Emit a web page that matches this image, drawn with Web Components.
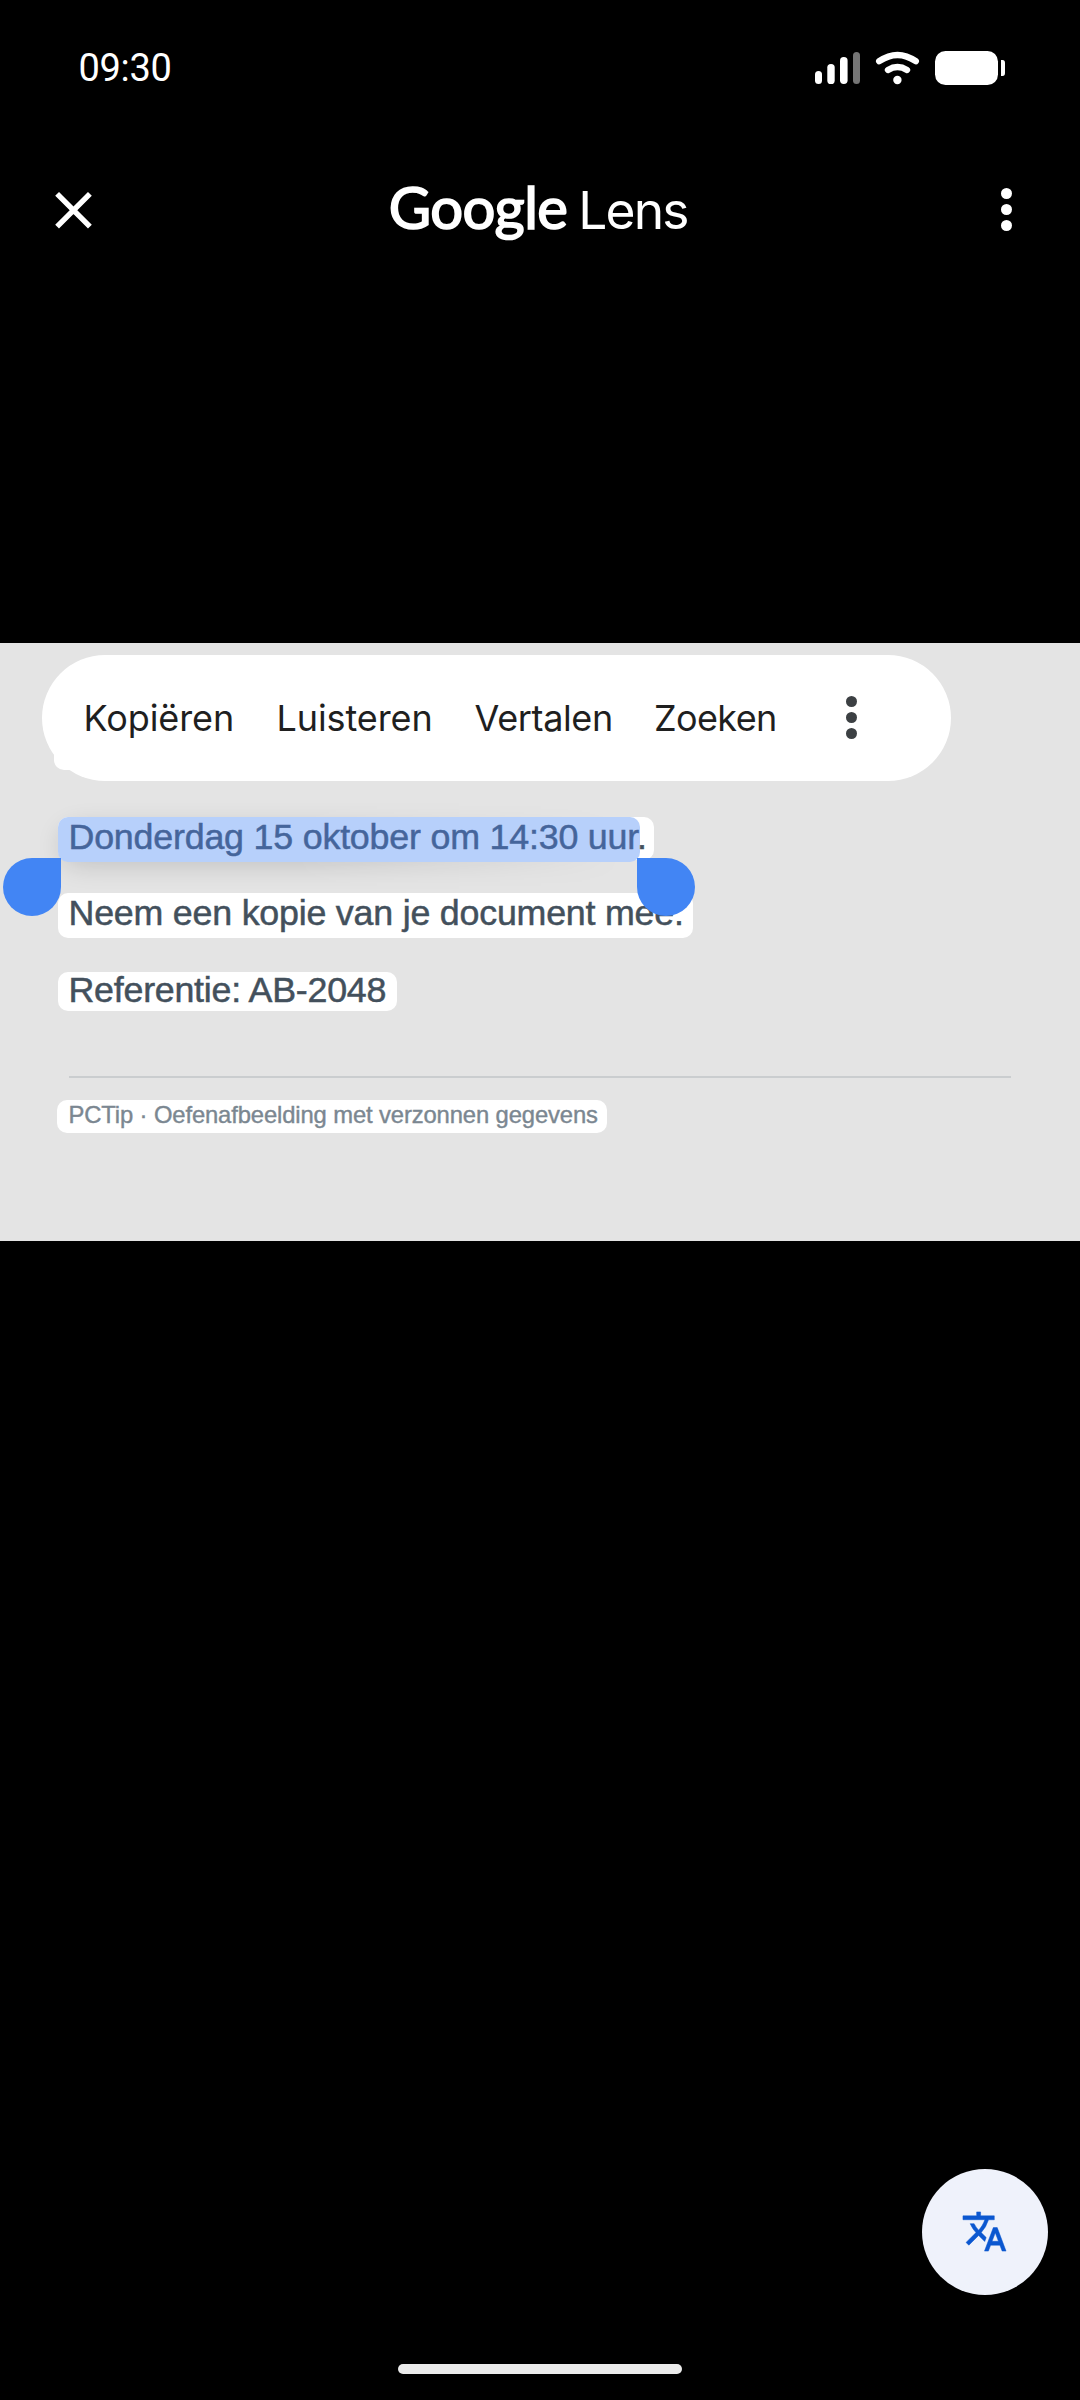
<!DOCTYPE html>
<html lang="nl">
<head>
<meta charset="utf-8">
<title>Google Lens</title>
<style>
html,body{margin:0;background:#000}
</style>
</head>
<body>
<lens-screen></lens-screen>
<script>
const define = (name, html, setup) => {
  const t = document.createElement('template');
  t.innerHTML = html;
  customElements.define(name, class extends HTMLElement {
    constructor() {
      super();
      this.attachShadow({mode: 'open'}).append(t.content.cloneNode(true));
    }
    connectedCallback() { if (setup) setup(this); }
  });
};

// One line of text whose tracking is adjusted so that its ink spans the "ink" width.
define('tracked-text', `<style>
:host{display:block;white-space:pre;flex:none}
span{display:block}
</style><span><slot></slot></span>`, el => {
  const cs = getComputedStyle(el);
  const ctx = document.createElement('canvas').getContext('2d');
  ctx.font = cs.fontWeight + ' ' + cs.fontSize + ' ' + cs.fontFamily;
  const s = el.textContent, m = ctx.measureText(s), w = +el.getAttribute('ink');
  const ink = m.actualBoundingBoxLeft + m.actualBoundingBoxRight;
  el.style.letterSpacing = (w - ink) / (s.length - 1) + 'px';
  el.style.width = w + 'px';
  el.shadowRoot.querySelector('span').style.marginLeft = m.actualBoundingBoxLeft + 'px';
});

define('more-dots', `<style>
:host{display:flex;flex-direction:column;gap:5px;flex:none}
i{width:11px;height:11px;border-radius:50%;background:currentColor}
</style><i></i><i></i><i></i>`);

define('status-icons', `<style>
:host{display:block;flex:none}
svg{display:block;width:192px;height:36px}
</style>
<svg viewBox="813 50 192 36" fill="#fff">
<rect x="815" y="71" width="7" height="13" rx="3.5"/>
<rect x="827.3" y="64" width="7.4" height="20" rx="3.6"/>
<rect x="840" y="57" width="7.6" height="27" rx="3.7"/>
<rect x="853" y="52" width="7" height="32" rx="3.5" fill="#757575"/>
<path d="M879.2 61.2Q897.5 48.6 915.8 61.2M888 69.9Q897.5 64.3 907 69.9" fill="none" stroke="#fff" stroke-width="6.4" stroke-linecap="round"/>
<circle cx="897.4" cy="80" r="4.2"/>
<rect x="935" y="51" width="63" height="34" rx="10.5"/>
<path d="M1001 60h1.5q2.5 0 2.5 3v10q0 3-2.5 3h-1.5z"/>
</svg>`);

define('phone-status', `<style>
:host{display:flex;box-sizing:border-box;height:136px;padding:0 75px 0 80.5px;justify-content:space-between;align-items:center;color:#fff}
tracked-text{font:400 38px/136px Roboto,sans-serif;height:136px}
</style>
<tracked-text ink="90">09:30</tracked-text><status-icons></status-icons>`);

define('lens-header', `<style>
:host{display:flex;box-sizing:border-box;height:147px;padding:0 68px 0 54px;justify-content:space-between;align-items:center;color:#fff}
svg{display:block;width:38px;height:38px}
.logo{display:flex;gap:16px;align-items:baseline;margin:0 0 2px -15px}
.g{font:400 58px/100px Lato,sans-serif;-webkit-text-stroke:1.7px #fff}
.l{font:400 51.5px/100px Inter,sans-serif}
</style>
<svg viewBox="0 0 38 38"><path d="M3.1 2.8L35.9 35.6M35.9 2.8L3.1 35.6" stroke="#fff" stroke-width="5.4"/></svg>
<div class="logo"><tracked-text class="g" ink="175.5">Google</tracked-text><tracked-text class="l" ink="105">Lens</tracked-text></div>
<more-dots></more-dots>`);

define('action-pill', `<style>
:host{display:flex;box-sizing:border-box;width:909px;height:126px;border-radius:63px;background:#fff;padding-left:44.5px;align-items:center;color:#1f1f1f;font:400 36px/126px Inter,sans-serif;position:relative}
/* corner of the heading's text box that shows from under the pill */
:host::before{content:"";position:absolute;left:12px;top:80px;width:80px;height:35.5px;border-radius:10px;background:#fff;z-index:-1}
tracked-text:nth-of-type(2){margin-left:47.5px}
tracked-text:nth-of-type(3){margin-left:44px}
tracked-text:nth-of-type(4){margin-left:45px}
more-dots{color:#3c4043;margin-left:71px}
</style>
<tracked-text ink="145.5">Kopiëren</tracked-text><tracked-text ink="151">Luisteren</tracked-text><tracked-text ink="136.5">Vertalen</tracked-text><tracked-text ink="119">Zoeken</tracked-text><more-dots></more-dots>`);

define('text-chip', `<style>
:host{display:block;box-sizing:border-box;background:#fff;border-radius:10px;color:#43505c;font:400 35.8px/40px "Liberation Sans",Arial,sans-serif;padding-left:12.5px;position:relative;-webkit-text-stroke:.5px currentColor}
</style><slot></slot>`);

define('drag-handle', `<style>
:host{display:block;position:absolute;width:58px;height:58px;background:#4285f4;border-radius:29px;z-index:3}
:host([side=start]){border-top-right-radius:0}
:host([side=end]){border-top-left-radius:0}
</style>`);

define('photo-view', `<style>
:host{display:flex;flex-direction:column;align-items:flex-start;box-sizing:border-box;height:598px;background:#e4e4e4;padding:11.5px 0 0 58px;position:relative;z-index:0}
action-pill{margin-left:-16px}
.a{width:596px;height:43px;margin-top:36.5px}
.a tracked-text{position:relative;z-index:2}
.a b{font-weight:400;color:#45659b;-webkit-text-stroke:.5px #45659b}
.sel{position:absolute;left:0;top:0;width:582px;height:44.5px;border-radius:10px;background:#b7d0fb;z-index:1}
.shade{position:absolute;left:-50px;top:-20px;width:640px;height:105px;z-index:-1;
-webkit-mask-image:linear-gradient(90deg,#000 45%,transparent 96%)}
.shade::before{content:"";position:absolute;left:56px;top:26px;width:700px;height:32px;border-radius:16px;box-shadow:0 7px 26px 3px rgba(0,0,0,.16)}
.b{width:635px;height:45px;margin-top:33px;line-height:41px}
.c{width:338.5px;height:39px;line-height:37px;margin-top:33.5px}
hr{width:942px;height:2px;border:0;margin:65px 0 0 11px;background:#cacdcf}
.d{width:550px;height:33.5px;margin:22px 0 0 -1px;font-size:23.8px;line-height:29.5px;color:#7b8791;-webkit-text-stroke-width:.4px}
drag-handle[side=start]{left:3px;top:215px}
drag-handle[side=end]{left:637px;top:215px}
</style>
<action-pill></action-pill>
<text-chip class="a"><div class="shade"></div><div class="sel"></div><tracked-text ink="573.5"><b>Donderdag 15 oktober om 14:30 uur</b>.</tracked-text></text-chip>
<text-chip class="b"><tracked-text ink="610.5">Neem een kopie van je document mee.</tracked-text></text-chip>
<text-chip class="c"><tracked-text ink="317">Referentie: AB-2048</tracked-text></text-chip>
<hr>
<text-chip class="d"><tracked-text ink="528.5">PCTip · Oefenafbeelding met verzonnen gegevens</tracked-text></text-chip>
<drag-handle side="start"></drag-handle><drag-handle side="end"></drag-handle>`);

define('translate-button', `<style>
:host{display:flex;width:126px;height:126px;border-radius:50%;background:#eff2fb;align-items:center;justify-content:center}
svg{display:block;width:47px;height:47px;margin:0 1.5px 1.5px 0}
</style>
<svg viewBox="0 0 24 24" fill="#0b57d0" stroke="#0b57d0" stroke-width=".25"><path d="M12.87 15.07l-2.54-2.51.03-.03A17.52 17.52 0 0 0 14.07 6H17V4h-7V2H8v2H1v1.99h11.17C11.5 7.92 10.44 9.75 9 11.35 8.07 10.32 7.3 9.19 6.69 8h-2c.73 1.63 1.73 3.17 2.98 4.56l-5.09 5.02L4 19l5-5 3.11 3.11.76-2.04zM18.5 10h-2L12 22h2l1.12-3h4.75L21 22h2l-4.5-12zm-2.62 7l1.62-4.33L19.12 17h-3.24z"/></svg>`);

define('lens-screen', `<style>
:host{display:flex;flex-direction:column;width:1080px;height:2400px;background:#000;overflow:hidden}
photo-view{margin-top:360px;flex:none}
translate-button{align-self:flex-end;margin:928px 32px 0 0;flex:none}
.home{align-self:center;width:284px;height:10px;border-radius:5px;background:#ebebeb;margin-top:69px}
</style>
<phone-status></phone-status><lens-header></lens-header><photo-view></photo-view><translate-button></translate-button><div class="home"></div>`);
</script>
</body>
</html>
